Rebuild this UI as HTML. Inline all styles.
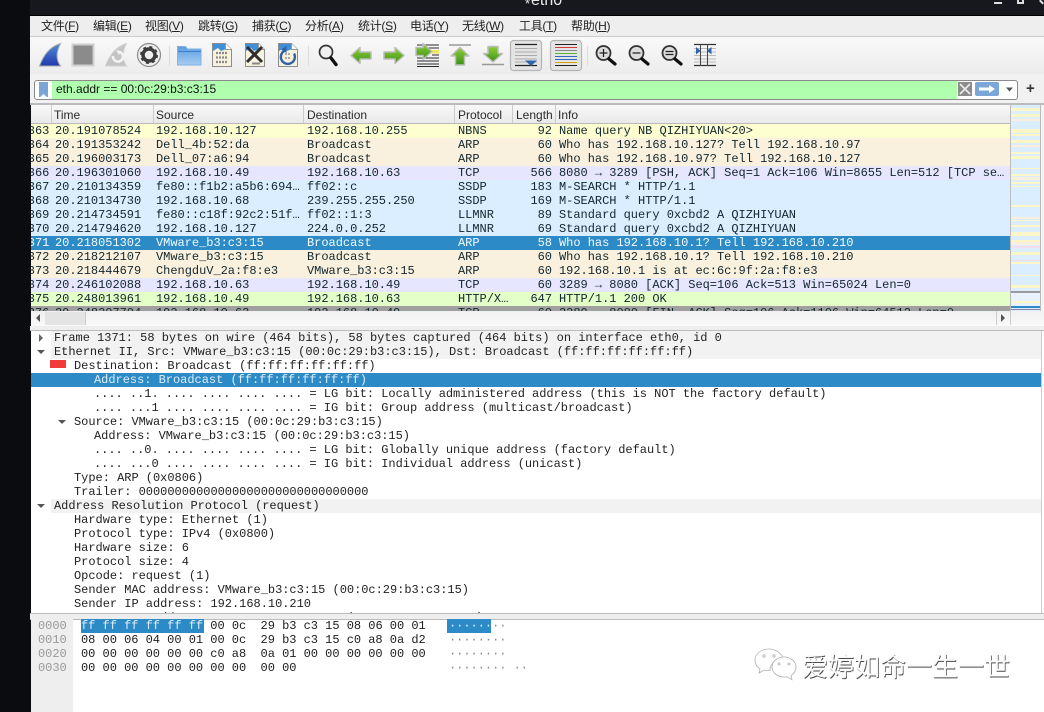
<!DOCTYPE html>
<html><head><meta charset="utf-8"><style>
html,body{margin:0;padding:0;background:#fff}
#p{position:relative;width:1044px;height:712px;overflow:hidden;background:#fff;font-family:"Liberation Sans","Noto Sans CJK SC",sans-serif}
#p div,#p span{position:absolute;white-space:pre}
#p u,#p i{position:static}
.m{font-size:12px;line-height:16px;top:18px;color:#222;letter-spacing:-.3px}
.h{top:105px;height:18px;line-height:21px;font-size:12px;color:#2a2a2a;border-left:1px solid #ccc;padding-left:2px;box-sizing:border-box}
#rows,#rows *,#det,#det *,#hex,#hex *{font-family:"Liberation Mono",monospace;font-size:12px;line-height:14px;letter-spacing:-.02px}
#rows{left:31px;top:124px;width:979px;height:187px;overflow:hidden}
.r{left:0;width:979px;height:14px;color:#12272e}
.r span{top:0}
.n{left:-10.4px}.t{left:24px}.s{left:125px;width:146px;overflow:hidden}.d{left:276px}.o{left:427px}.l{left:490px;width:31px;text-align:right}.f{left:528px;width:450px;overflow:hidden}
.Y{background:#feffd0}.A{background:#faf0de}.T{background:#e7e6ff}.U{background:#daeeff}.H{background:#e4ffc7}.G{background:#a0a0a0}.S{background:#2c8ac6;color:#f4fbff}
#det{left:31px;top:331px;width:1010px;height:283px;overflow:hidden}
.e{left:0;width:1010px;height:14px;color:#222}
.e.g{left:20px;width:990px;background:#f2f2f2}
#hex{left:31px;top:619px;width:1013px;height:93px;color:#1c1c1c}
</style></head><body><div id="p">
<div style="left:0;top:0;width:31px;height:712px;background:#0a0c0f"></div>
<div style="left:30px;top:0;width:1014px;height:15px;background:#16181d"></div>
<div style="left:30px;top:15px;width:1014px;height:1px;background:#000"></div>
<div style="left:525px;top:-3px;color:#e8e8e8;font-size:13px;line-height:14px">*</div>
<div style="left:531px;top:-8px;color:#e8e8e8;font-size:16px;line-height:18px">eth0</div>
<div style="left:994px;top:2px;width:8px;height:2px;background:#ddd"></div>
<div style="left:1017px;top:-3px;width:3px;height:3px;border:2px solid #ddd"></div>
<div style="left:1039px;top:1px;width:5px;height:2px;background:#ddd;transform:rotate(45deg)"></div>

<div style="left:30px;top:16px;width:1014px;height:20px;background:#eee;border-bottom:1px solid #ccc"></div>
<div class="m" style="left:41px">文件(<u>F</u>)</div>
<div class="m" style="left:93px">编辑(<u>E</u>)</div>
<div class="m" style="left:145px">视图(<u>V</u>)</div>
<div class="m" style="left:198px">跳转(<u>G</u>)</div>
<div class="m" style="left:252px">捕获(<u>C</u>)</div>
<div class="m" style="left:305px">分析(<u>A</u>)</div>
<div class="m" style="left:358px">统计(<u>S</u>)</div>
<div class="m" style="left:410px">电话(<u>Y</u>)</div>
<div class="m" style="left:462px">无线(<u>W</u>)</div>
<div class="m" style="left:519px">工具(<u>T</u>)</div>
<div class="m" style="left:571px">帮助(<u>H</u>)</div>

<div style="left:30px;top:37px;width:1014px;height:37px;background:linear-gradient(#f9f9f9,#ececec);border-bottom:1px solid #bbb"></div>
<svg width="1044" height="74" viewBox="0 0 1044 74" style="position:absolute;left:0;top:0">
<defs>
<linearGradient id="b" x1="0" y1="0" x2="0" y2="1"><stop offset="0" stop-color="#4d8fd8"/><stop offset="1" stop-color="#2238ad"/></linearGradient>
<linearGradient id="fo" x1="0" y1="0" x2="0" y2="1"><stop offset="0" stop-color="#5d9be0"/><stop offset="1" stop-color="#a5cdf3"/></linearGradient>
<linearGradient id="gr" x1="0" y1="0" x2="0" y2="1"><stop offset="0" stop-color="#8fcf3a"/><stop offset="1" stop-color="#3b9212"/></linearGradient>
</defs>
<path d="M39.500 66C44 54 50 47 60.500 43.500C56 52 56 60 60.500 66Z" fill="url(#b)" stroke="#a8a8a8" stroke-width="1"/>
<rect x="72.500" y="44.500" width="21" height="21" fill="#8b8b8b" stroke="#cfcfcf" stroke-width="2"/>
<path d="M105.500 66C110 54 116 47 126.500 43.500C122 52 122 60 126.500 66Z" fill="#c4c4c4" stroke="#d0d0d0"/>
<path d="M113 56a5 5 0 1 0 7-4" fill="none" stroke="#f4f4f4" stroke-width="2.500"/><path d="M116 50l5 1-2 4z" fill="#f4f4f4"/>
<circle cx="149" cy="55" r="11.500" fill="#eee" stroke="#8a8a8a" stroke-width="1.200"/>
<circle cx="149" cy="55" r="6" fill="none" stroke="#3c3c3c" stroke-width="3.500"/>
<circle cx="149" cy="55" r="8" fill="none" stroke="#3c3c3c" stroke-width="2" stroke-dasharray="3 3.300"/>
<path d="M169.500 46v20M308.500 46v20M587.500 46v20" stroke="#ddd" stroke-width="1"/>
<path d="M177.500 65V46.500h8l2 2.500h13.500v16z" fill="url(#fo)" stroke="#7fb2e6"/>
<path d="M178 51.500h23" stroke="#3f80cc"/>
<path d="M212.500 43.500h13l6 6v17h-19z" fill="#f6f2de" stroke="#8c8c8c"/><path d="M213 44h12l1 5-5 2-3-3-5 3z" fill="#3f8ed8"/><path d="M225.500 43.500v6h6" fill="#fff" stroke="#999"/><path d="M216 53h11M216 57.500h11M216 62h11" stroke="#8a8a8a" stroke-width="2.200" stroke-dasharray="2 1"/>
<path d="M245.500 43.500h13l6 6v17h-19z" fill="#f6f2de" stroke="#8c8c8c"/><path d="M246 44h12l1 5-5 2-3-3-5 3z" fill="#3f8ed8"/><path d="M258.500 43.500v6h6" fill="#fff" stroke="#999"/>
<path d="M252 63.500h8" stroke="#888" stroke-width="2"/>
<path d="M247 47l15 15M262 47l-15 15" stroke="#2e2e2e" stroke-width="3"/>
<path d="M278.500 43.500h13l6 6v17h-19z" fill="#f6f2de" stroke="#8c8c8c"/><path d="M279 44h12l1 5-5 2-3-3-5 3z" fill="#3f8ed8"/><path d="M291.500 43.500v6h6" fill="#fff" stroke="#999"/>
<path d="M285 54h6M285 58h6" stroke="#aaa" stroke-width="2" stroke-dasharray="2 1"/>
<path d="M285 50.500a7 7 0 1 0 9 3" fill="none" stroke="#2f62a8" stroke-width="2.400"/><path d="M281 49.500l5.500-3.500v7z" fill="#2f62a8"/>
<circle cx="326" cy="52" r="6.500" fill="#f0f0f0" stroke="#333" stroke-width="1.700"/><path d="M331 58l5 6.500" stroke="#111" stroke-width="3.400" stroke-linecap="round"/>
<g stroke="#bdbdbd" stroke-width="1.500" stroke-linejoin="round" fill="url(#gr)">
<path d="M351 55.500l9-8v4.500h11v7h-11v4.500z"/>
<path d="M404 55.500l-9-8v4.500h-11v7h11v4.500z"/>
</g>
<path d="M417 45h22M417 48h22M417 58h22M417 61h22M417 64h22M417 66.500h22M432 55h7" stroke="#2b2b2b" stroke-width="1.100"/>
<rect x="432" y="50" width="7" height="3.500" fill="#f1e35a"/>
<path d="M432 51.500l-9-8v4h-7v8h7v4z" fill="url(#gr)" stroke="#bdbdbd" stroke-width="1.500" stroke-linejoin="round"/>
<path d="M449 45h22" stroke="#999" stroke-width="1.600"/>
<path d="M460 47.500l9 8.500h-4.500v9h-9v-9h-4.500z" fill="url(#gr)" stroke="#bdbdbd" stroke-width="1.500" stroke-linejoin="round"/>
<path d="M482 64.500h22" stroke="#999" stroke-width="1.600"/>
<path d="M493 62l-9.500-8.500h4.500v-7h10v7h4.500z" fill="url(#gr)" stroke="#bdbdbd" stroke-width="1.500" stroke-linejoin="round"/>
<rect x="510.500" y="40.500" width="31" height="30" rx="3" fill="#e4e4e4" stroke="#b4b4b4" stroke-width="1.200"/>
<path d="M515 44.500h22M515 65.500h22" stroke="#222" stroke-width="1.200"/>
<path d="M515 48.500h22M515 52h22M515 55.500h22M515 59h22M515 62h22" stroke="#aaa"/>
<path d="M525 60.500h12l-6 5.500z" fill="#2d66ad"/>
<rect x="550.500" y="40.500" width="31" height="30" rx="3" fill="#e4e4e4" stroke="#b4b4b4" stroke-width="1.200"/>
<path d="M555 44.500h22" stroke="#222"/><path d="M555 47.500h22" stroke="#d23b3b"/><path d="M555 50.500h22" stroke="#888"/><path d="M555 53.500h22" stroke="#58b52f"/><path d="M555 56.500h22" stroke="#2d66c0"/><path d="M555 59.500h22" stroke="#2d66c0"/><path d="M555 62.500h22" stroke="#d6a200"/><path d="M555 65.500h22" stroke="#222"/>
<g fill="#dcdcdc" stroke="#333" stroke-width="1.800"><circle cx="603.500" cy="53" r="7"/><circle cx="636.500" cy="53" r="7"/><circle cx="669.500" cy="53" r="7"/></g>
<path d="M609 59l6 5M642 59l6 5M675 59l6 5" stroke="#111" stroke-width="3.200" stroke-linecap="round"/>
<path d="M599.500 53h8M603.500 49v8M632.500 53h8M665.500 51.500h8M665.500 54.500h8" stroke="#222" stroke-width="1.300"/>
<path d="M694 44.500h22M694 65.500h22" stroke="#333" stroke-width="1.200"/>
<path d="M694 48.500h22M694 52h22M694 55.500h22M694 59h22M694 62h22" stroke="#bbb"/>
<path d="M700.500 44v22M707.500 44v22" stroke="#444"/>
<path d="M696 47v7.500l4.500-3.700zM711.500 47v7.500l-4.500-3.700z" fill="#2d66ad"/>
</svg>

<div style="left:30px;top:74px;width:1014px;height:31px;background:#f1f1f1"></div>
<div style="left:34px;top:80px;width:982px;height:18px;border:1px solid #8a8a8a;border-radius:3px;background:#fff;box-sizing:content-box"></div>
<div style="left:52px;top:81px;width:905px;height:18px;background:#afffaf"></div>
<div style="left:39px;top:82px;width:9px;height:15px;background:#7aa6d6"></div>
<svg width="9" height="4" style="position:absolute;left:39px;top:94px"><path d="M0 4L4.500 0 9 4z" fill="#fff"/></svg>
<div style="left:56px;top:82px;font-size:12px;line-height:15px;color:#111">eth.addr == 00:0c:29:b3:c3:15</div>
<svg width="100" height="18" style="position:absolute;left:957px;top:81px"><rect x="1" y="1" width="14" height="14" fill="#8c8c8c"/><path d="M3 3l10 10M13 3L3 13" stroke="#eee" stroke-width="1.600"/><rect x="18" y="1" width="24" height="14" rx="2" fill="#7ba6d8"/><path d="M22 6.500h10V4l6 4-6 4V9.500H22z" fill="#fff"/><path d="M49 6.500h7l-3.500 4z" fill="#555"/></svg>
<div style="left:1026px;top:80px;font-size:15px;font-weight:bold;line-height:18px;color:#333">+</div>

<div style="left:30px;top:103px;width:1014px;height:2px;background:#bbb"></div>
<div style="left:31px;top:105px;width:979px;height:18px;background:linear-gradient(#f8f8f8,#e9e9e9);border-bottom:1px solid #bbb"></div>
<div class="h" style="left:51px;width:102px">Time</div>
<div class="h" style="left:153px;width:151px">Source</div>
<div class="h" style="left:303px;width:151px;padding-left:3px">Destination</div>
<div class="h" style="left:454px;width:58px;padding-left:3px">Protocol</div>
<div class="h" style="left:512px;width:43px;padding-left:3px">Length</div>
<div class="h" style="left:555px;width:400px;padding-left:2px">Info</div>

<div id="rows">
<div class="r Y" style="top:0"><span class="n">1363</span><span class="t">20.191078524</span><span class="s">192.168.10.127</span><span class="d">192.168.10.255</span><span class="o">NBNS</span><span class="l">92</span><span class="f">Name query NB QIZHIYUAN&lt;20&gt;</span></div>
<div class="r A" style="top:14px"><span class="n">1364</span><span class="t">20.191353242</span><span class="s">Dell_4b:52:da</span><span class="d">Broadcast</span><span class="o">ARP</span><span class="l">60</span><span class="f">Who has 192.168.10.127? Tell 192.168.10.97</span></div>
<div class="r A" style="top:28px"><span class="n">1365</span><span class="t">20.196003173</span><span class="s">Dell_07:a6:94</span><span class="d">Broadcast</span><span class="o">ARP</span><span class="l">60</span><span class="f">Who has 192.168.10.97? Tell 192.168.10.127</span></div>
<div class="r T" style="top:42px"><span class="n">1366</span><span class="t">20.196301060</span><span class="s">192.168.10.49</span><span class="d">192.168.10.63</span><span class="o">TCP</span><span class="l">566</span><span class="f">8080 → 3289 [PSH, ACK] Seq=1 Ack=106 Win=8655 Len=512 [TCP se…</span></div>
<div class="r U" style="top:56px"><span class="n">1367</span><span class="t">20.210134359</span><span class="s">fe80::f1b2:a5b6:694…</span><span class="d">ff02::c</span><span class="o">SSDP</span><span class="l">183</span><span class="f">M-SEARCH * HTTP/1.1</span></div>
<div class="r U" style="top:70px"><span class="n">1368</span><span class="t">20.210134730</span><span class="s">192.168.10.68</span><span class="d">239.255.255.250</span><span class="o">SSDP</span><span class="l">169</span><span class="f">M-SEARCH * HTTP/1.1</span></div>
<div class="r U" style="top:84px"><span class="n">1369</span><span class="t">20.214734591</span><span class="s">fe80::c18f:92c2:51f…</span><span class="d">ff02::1:3</span><span class="o">LLMNR</span><span class="l">89</span><span class="f">Standard query 0xcbd2 A QIZHIYUAN</span></div>
<div class="r U" style="top:98px"><span class="n">1370</span><span class="t">20.214794620</span><span class="s">192.168.10.127</span><span class="d">224.0.0.252</span><span class="o">LLMNR</span><span class="l">69</span><span class="f">Standard query 0xcbd2 A QIZHIYUAN</span></div>
<div class="r S" style="top:112px"><span class="n">1371</span><span class="t">20.218051302</span><span class="s">VMware_b3:c3:15</span><span class="d">Broadcast</span><span class="o">ARP</span><span class="l">58</span><span class="f">Who has 192.168.10.1? Tell 192.168.10.210</span></div>
<div class="r A" style="top:126px"><span class="n">1372</span><span class="t">20.218212107</span><span class="s">VMware_b3:c3:15</span><span class="d">Broadcast</span><span class="o">ARP</span><span class="l">60</span><span class="f">Who has 192.168.10.1? Tell 192.168.10.210</span></div>
<div class="r A" style="top:140px"><span class="n">1373</span><span class="t">20.218444679</span><span class="s">ChengduV_2a:f8:e3</span><span class="d">VMware_b3:c3:15</span><span class="o">ARP</span><span class="l">60</span><span class="f">192.168.10.1 is at ec:6c:9f:2a:f8:e3</span></div>
<div class="r T" style="top:154px"><span class="n">1374</span><span class="t">20.246102088</span><span class="s">192.168.10.63</span><span class="d">192.168.10.49</span><span class="o">TCP</span><span class="l">60</span><span class="f">3289 → 8080 [ACK] Seq=106 Ack=513 Win=65024 Len=0</span></div>
<div class="r H" style="top:168px"><span class="n">1375</span><span class="t">20.248013961</span><span class="s">192.168.10.49</span><span class="d">192.168.10.63</span><span class="o">HTTP/X…</span><span class="l">647</span><span class="f">HTTP/1.1 200 OK</span></div>
<div class="r G" style="top:182px"><span class="n">1376</span><span class="t">20.248207704</span><span class="s">192.168.10.63</span><span class="d">192.168.10.49</span><span class="o">TCP</span><span class="l">60</span><span class="f">3289 → 8080 [FIN, ACK] Seq=106 Ack=1106 Win=64512 Len=0</span></div>
</div>

<svg width="34" height="220" style="position:absolute;left:1010px;top:105px">
<rect width="31" height="206" fill="#daeeff"/>
<g fill="#fdf6c8"><rect y="3" width="30" height="3"/><rect y="9" width="30" height="3"/><rect y="24" width="30" height="4"/><rect y="29" width="30" height="2"/><rect y="35" width="30" height="3"/><rect y="47" width="30" height="2"/><rect y="51" width="30" height="3"/><rect y="63" width="30" height="1"/><rect y="69" width="30" height="2"/><rect y="77" width="30" height="2"/><rect y="81" width="30" height="1"/><rect y="100" width="30" height="2"/><rect y="115" width="30" height="1"/><rect y="120" width="30" height="2"/><rect y="127" width="30" height="4"/><rect y="135" width="30" height="2"/><rect y="147" width="30" height="3"/><rect y="157" width="30" height="2"/><rect y="170" width="30" height="1"/><rect y="180" width="30" height="3"/></g>
<g fill="#faeedd"><rect y="14" width="30" height="2"/><rect y="40" width="30" height="2"/><rect y="72" width="30" height="3"/><rect y="112" width="30" height="2"/><rect y="137" width="30" height="3"/><rect y="190" width="30" height="2"/></g>
<g fill="#f5ddf0"><rect y="141" width="30" height="2"/><rect y="155" width="30" height="1"/></g>
<rect y="186" width="30" height="2" fill="#9b9b9b"/>
<rect y="188" width="30" height="13" fill="#e9f3ff"/>
<rect y="196" width="30" height="2" fill="#fdf6c8"/><rect y="201" width="30" height="2" fill="#2c8ac6"/><rect y="204" width="30" height="1" fill="#8a7aa8"/>
<rect x="30" width="1" height="206" fill="#bbb"/><rect x="0" width="1" height="206" fill="#bbb"/>
</svg>
<div style="left:1041px;top:105px;width:3px;height:220px;background:#f4f4f4"></div>

<div style="left:31px;top:311px;width:1013px;height:15px;background:linear-gradient(#f0f0f0,#fafafa);border-bottom:1px solid #bbb"></div>
<div style="left:45px;top:312px;width:40px;height:13px;background:#e4e4e4;border-right:1px solid #ccc"></div>
<svg width="1010" height="14" style="position:absolute;left:31px;top:311px"><path d="M9 3v8L5 7z" fill="#555"/><path d="M970 3v8l4-4z" fill="#555"/><path d="M965.500 0v14M979.500 0v14" stroke="#ccc"/></svg>
<div style="left:30px;top:326px;width:1014px;height:4px;background:#eee;border-bottom:1px solid #bbb"></div>

<div id="det">
<div class="e g" style="top:0"><span style="left:3px">Frame 1371: 58 bytes on wire (464 bits), 58 bytes captured (464 bits) on interface eth0, id 0</span></div>
<div class="e g" style="top:14px"><span style="left:3px">Ethernet II, Src: VMware_b3:c3:15 (00:0c:29:b3:c3:15), Dst: Broadcast (ff:ff:ff:ff:ff:ff)</span></div>
<div class="e" style="top:28px"><span style="left:43px">Destination: Broadcast (ff:ff:ff:ff:ff:ff)</span></div>
<div class="e" style="top:42px;background:#2c8ac6;color:#dfeefa"><span style="left:63px">Address: Broadcast (ff:ff:ff:ff:ff:ff)</span></div>
<div class="e" style="top:56px"><span style="left:63px">.... ..1. .... .... .... .... = LG bit: Locally administered address (this is NOT the factory default)</span></div>
<div class="e" style="top:70px"><span style="left:63px">.... ...1 .... .... .... .... = IG bit: Group address (multicast/broadcast)</span></div>
<div class="e" style="top:84px"><span style="left:43px">Source: VMware_b3:c3:15 (00:0c:29:b3:c3:15)</span></div>
<div class="e" style="top:98px"><span style="left:63px">Address: VMware_b3:c3:15 (00:0c:29:b3:c3:15)</span></div>
<div class="e" style="top:112px"><span style="left:63px">.... ..0. .... .... .... .... = LG bit: Globally unique address (factory default)</span></div>
<div class="e" style="top:126px"><span style="left:63px">.... ...0 .... .... .... .... = IG bit: Individual address (unicast)</span></div>
<div class="e" style="top:140px"><span style="left:43px">Type: ARP (0x0806)</span></div>
<div class="e" style="top:154px"><span style="left:43px">Trailer: 00000000000000000000000000000000</span></div>
<div class="e g" style="top:168px"><span style="left:3px">Address Resolution Protocol (request)</span></div>
<div class="e" style="top:182px"><span style="left:43px">Hardware type: Ethernet (1)</span></div>
<div class="e" style="top:196px"><span style="left:43px">Protocol type: IPv4 (0x0800)</span></div>
<div class="e" style="top:210px"><span style="left:43px">Hardware size: 6</span></div>
<div class="e" style="top:224px"><span style="left:43px">Protocol size: 4</span></div>
<div class="e" style="top:238px"><span style="left:43px">Opcode: request (1)</span></div>
<div class="e" style="top:252px"><span style="left:43px">Sender MAC address: VMware_b3:c3:15 (00:0c:29:b3:c3:15)</span></div>
<div class="e" style="top:266px"><span style="left:43px">Sender IP address: 192.168.10.210</span></div>
<div class="e" style="top:280px"><span style="left:43px">Target MAC address: 00:00:00:00:00:00 (00:00:00:00:00:00)</span></div>
</div>
<svg width="70" height="200" style="position:absolute;left:31px;top:331px">
<path d="M8 3v8l4-4z" fill="#666"/>
<path d="M6 19h8l-4 4z" fill="#555"/>
<rect x="19" y="29" width="16" height="8" fill="#f33a3a"/>
<path d="M27 89h8l-4 4z" fill="#555"/>
<path d="M6 173h8l-4 4z" fill="#555"/>
</svg>
<div style="left:1041px;top:331px;width:1px;height:283px;background:#ccc"></div>

<div style="left:30px;top:613px;width:1014px;height:5px;background:#eee;border-top:1px solid #bbb;border-bottom:1px solid #bbb"></div>
<div style="left:31px;top:619px;width:42px;height:93px;background:#eee"></div>
<div style="left:81px;top:619px;width:123px;height:14px;background:#2c8ac6"></div>
<div style="left:447px;top:619px;width:44px;height:14px;background:#2c8ac6"></div>
<div id="hex">
<span style="left:7px;top:0;color:#999">0000</span><span style="left:50px;top:0"><b style="font-weight:normal;color:#dfeefa">ff ff ff ff ff ff</b> 00 0c  29 b3 c3 15 08 06 00 01</span><span style="left:418px;top:0;color:#e4f2fb">······<b style="font-weight:normal;color:#888">··</b></span>
<span style="left:7px;top:14px;color:#999">0010</span><span style="left:50px;top:14px">08 00 06 04 00 01 00 0c  29 b3 c3 15 c0 a8 0a d2</span><span style="left:418px;top:14px;color:#888">········</span>
<span style="left:7px;top:28px;color:#999">0020</span><span style="left:50px;top:28px">00 00 00 00 00 00 c0 a8  0a 01 00 00 00 00 00 00</span><span style="left:418px;top:28px;color:#888">········</span>
<span style="left:7px;top:42px;color:#999">0030</span><span style="left:50px;top:42px">00 00 00 00 00 00 00 00  00 00</span><span style="left:418px;top:42px;color:#888">········ ··</span>
</div>

<svg width="44" height="40" viewBox="0 0 44 40" style="position:absolute;left:754px;top:646px" fill="#fff" stroke="#b0b0b0" stroke-width=".8">
<path d="M15 3C7 3 1 8 1 14c0 4 2 7 5 9l-1 4 5-3c2 .5 4 .6 6 .5 0-8 7-12 13-12C27 7 22 3 15 3z"/>
<path d="M30 11c-6 0-12 4-12 10s6 10 12 10c1 0 2 0 3-.3l5 3-1-4c3-2 5-5 5-8.700 0-6-6-10-12-10z"/>
<circle cx="10" cy="10" r="1.200"/><circle cx="20" cy="10" r="1.200"/><circle cx="25" cy="18" r="1"/><circle cx="35" cy="18" r="1"/>
</svg>
<div style="left:802px;top:651px;font-family:'Noto Sans CJK SC',sans-serif;font-size:26px;line-height:30px;color:#fafafa;text-shadow:.8px .8px 0 #4a4a4a">爱婷如命一生一世</div>
</div></body></html>
